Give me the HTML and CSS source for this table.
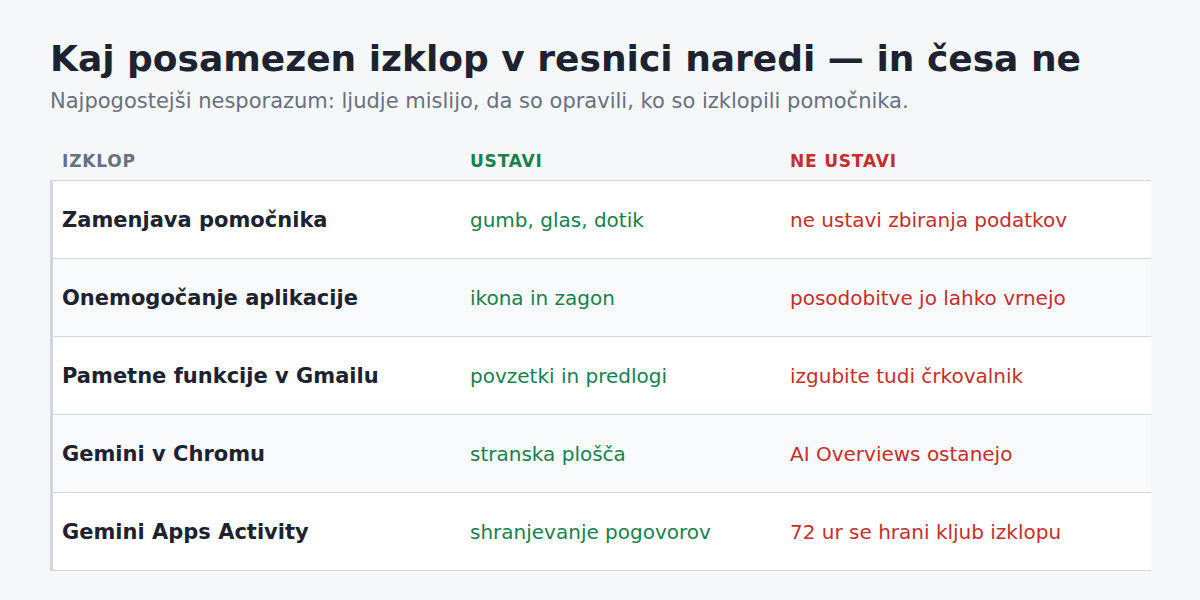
FILE: index.html
```html
<!DOCTYPE html>
<html lang="sl">
<head>
<meta charset="utf-8">
<title>Kaj posamezen izklop v resnici naredi</title>
<link rel="stylesheet" href="styles.css">
</head>
<body>
<main class="page">
  <h1 class="title">Kaj posamezen izklop v resnici naredi — in česa ne</h1>
  <p class="subtitle">Najpogostejši nesporazum: ljudje mislijo, da so opravili, ko so izklopili pomočnika.</p>
  <div class="table">
    <div class="row head">
      <div class="cell h-name">Izklop</div>
      <div class="cell h-yes">Ustavi</div>
      <div class="cell h-no">Ne ustavi</div>
    </div>
    <div class="body">
      <div class="row">
        <div class="cell name">Zamenjava pomočnika</div>
        <div class="cell yes">gumb, glas, dotik</div>
        <div class="cell no">ne ustavi zbiranja podatkov</div>
      </div>
      <div class="row alt">
        <div class="cell name">Onemogočanje aplikacije</div>
        <div class="cell yes">ikona in zagon</div>
        <div class="cell no">posodobitve jo lahko vrnejo</div>
      </div>
      <div class="row">
        <div class="cell name">Pametne funkcije v Gmailu</div>
        <div class="cell yes">povzetki in predlogi</div>
        <div class="cell no">izgubite tudi črkovalnik</div>
      </div>
      <div class="row alt">
        <div class="cell name">Gemini v Chromu</div>
        <div class="cell yes">stranska plošča</div>
        <div class="cell no">AI Overviews ostanejo</div>
      </div>
      <div class="row">
        <div class="cell name">Gemini Apps Activity</div>
        <div class="cell yes">shranjevanje pogovorov</div>
        <div class="cell no">72 ur se hrani kljub izklopu</div>
      </div>
    </div>
  </div>
</main>
</body>
</html>
```

FILE: styles.css
```css
* { box-sizing: border-box; }
html, body { margin: 0; padding: 0; }
body {
  background: #f6f7f9;
  font-family: "DejaVu Sans", Verdana, sans-serif;
  color: #1c2230;
}
.page {
  padding: 38px 49px 0 50px;
}
.title {
  margin: 0;
  font-size: 36px;
  line-height: 42px;
  font-weight: 700;
  color: #1c2230;
}
.subtitle {
  margin: 7px 0 0;
  font-size: 21px;
  line-height: 28px;
  color: #677080;
}
.table {
  margin-top: 27px;
}
.row {
  display: grid;
  grid-template-columns: 408px 320px 1fr;
  align-items: center;
}
.head {
  height: 38px;
}
.head .cell {
  font-size: 17px;
  font-weight: 700;
  letter-spacing: 0.8px;
  text-transform: uppercase;
}
.cell {
  padding: 0 12px;
}
.h-name { color: #677184; }
.h-yes { color: #16804f; }
.h-no { color: #c62d2d; }
.body {
  border-top: 1px solid #d0d6e0;
}
.body .row {
  height: 78px;
  background: #ffffff;
  border-bottom: 1px solid #d0d6e0;
  box-shadow: inset 3px 0 0 #d0d6e0;
}
.body .row.alt {
  background: #f9fafc;
}
.name {
  font-size: 21px;
  font-weight: 700;
  color: #1c2230;
}
.yes {
  font-size: 20px;
  color: #16804f;
}
.no {
  font-size: 20px;
  color: #c62d2d;
}
```
